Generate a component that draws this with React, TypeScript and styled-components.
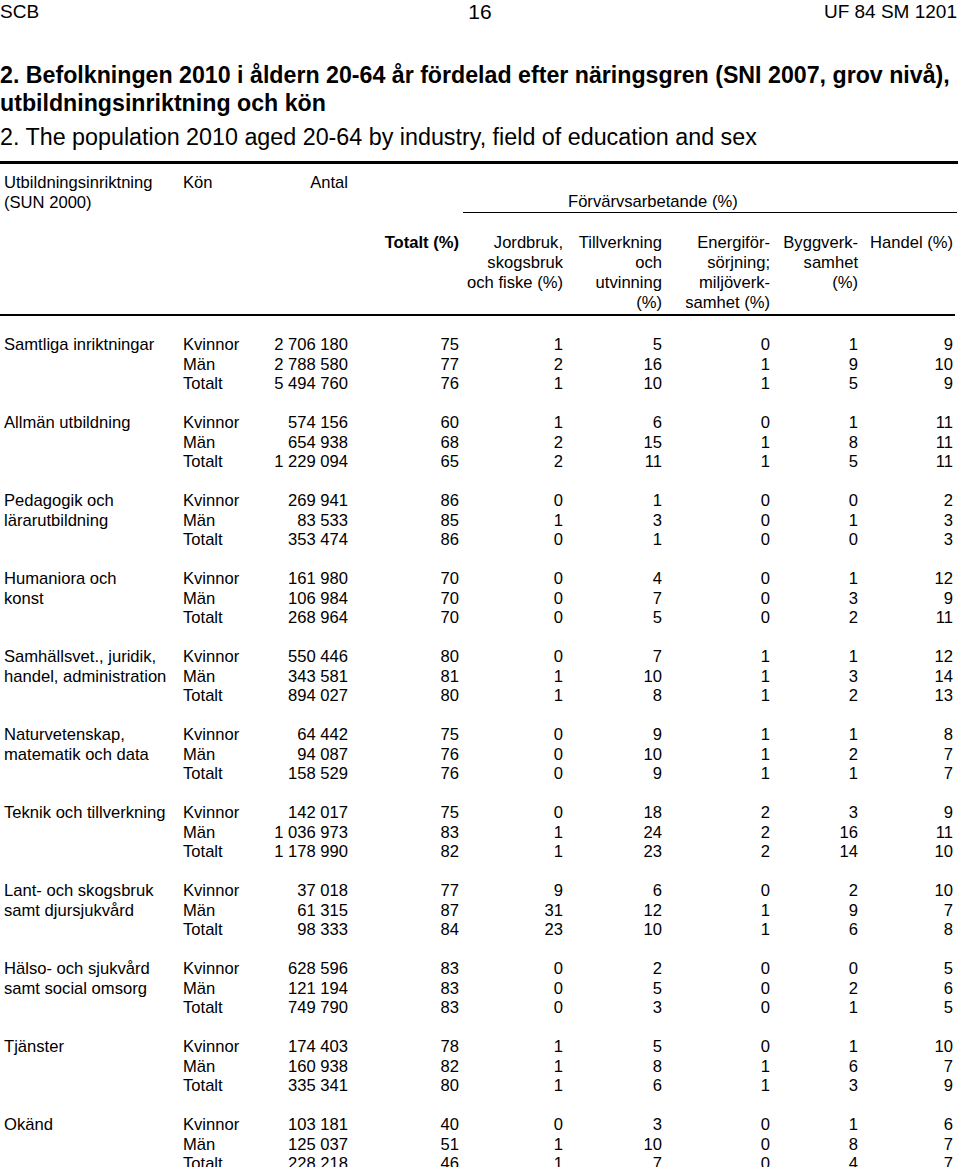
import React from "react";
import styled, { createGlobalStyle } from "styled-components";

const GlobalStyle = createGlobalStyle`
  html, body {
    margin: 0;
    padding: 0;
    background: #ffffff;
    overflow: hidden;
  }
  body {
    font-family: "Liberation Sans", Arial, Helvetica, sans-serif;
    color: #000;
  }
`;

const COLS = "183px 79px 86px 111px 104px 99px 108px 88px 95px";

const Page = styled.div`
  width: 958px;
  height: 1167px;
  overflow: hidden;
`;

const TopBar = styled.header`
  display: grid;
  grid-template-columns: 1fr auto 1fr;
  align-items: center;
  height: 24px;
  font-size: 19px;
  line-height: 24px;
`;

const TopLeft = styled.span`
  justify-self: start;
`;

const PageNo = styled.span`
  font-size: 21px;
  justify-self: center;
  margin-left: 2px;
`;

const TopRight = styled.span`
  justify-self: end;
  margin-right: 1px;
`;

const Title = styled.h1`
  margin: 37px 0 0 0;
  font-size: 23.2px;
  line-height: 28px;
  font-weight: bold;
  white-space: nowrap;
`;

const Subtitle = styled.h2`
  margin: 6px 0 0 0;
  font-size: 23.3px;
  line-height: 28px;
  font-weight: normal;
  white-space: nowrap;
`;

const ThickRule = styled.div`
  margin-top: 10px;
  height: 3px;
  background: #000;
  width: 958px;
`;

const HeadRowA = styled.div`
  display: grid;
  grid-template-columns: ${COLS};
  margin-top: 9px;
  font-size: 16.6px;
  line-height: 20px;
  height: 40px;
`;

const HeadRowB = styled.div`
  display: grid;
  grid-template-columns: ${COLS};
  margin-top: 20px;
  padding-bottom: 1px;
  font-size: 16.6px;
  line-height: 20px;
  border-bottom: 2px solid #000;
  width: 955px;
`;

const HeadCell = styled.div<{ $right?: boolean; $bold?: boolean; $pad?: number }>`
  text-align: ${(p) => (p.$right ? "right" : "left")};
  font-weight: ${(p) => (p.$bold ? "bold" : "normal")};
  padding-left: ${(p) => p.$pad ?? 0}px;
  white-space: nowrap;
`;

const SpanHead = styled.div`
  grid-column: 5 / 10;
  align-self: end;
  margin-left: 4px;
  margin-right: -4px;
  padding-left: 105px;
  border-bottom: 1px solid #000;
  white-space: nowrap;
`;

const Body = styled.div`
  padding-top: 19.25px;
`;

const Group = styled.div`
  display: grid;
  grid-template-columns: ${COLS};
  grid-auto-rows: 19.5px;
  margin-bottom: 19.5px;
  font-size: 16.6px;
  line-height: 19.5px;
`;

const Label = styled.div`
  grid-column: 1;
  grid-row: 1 / span 3;
  padding-left: 4px;
  white-space: nowrap;
`;

const Cell = styled.div<{ $right?: boolean }>`
  text-align: ${(p) => (p.$right ? "right" : "left")};
  white-space: nowrap;
`;

type Row = [string, string, ...number[]];
type GroupData = { label: string[]; rows: Row[] };

const data: GroupData[] = [
  {
    label: ["Samtliga inriktningar"],
    rows: [
      ["Kvinnor", "2 706 180", 75, 1, 5, 0, 1, 9],
      ["Män", "2 788 580", 77, 2, 16, 1, 9, 10],
      ["Totalt", "5 494 760", 76, 1, 10, 1, 5, 9],
    ],
  },
  {
    label: ["Allmän utbildning"],
    rows: [
      ["Kvinnor", "574 156", 60, 1, 6, 0, 1, 11],
      ["Män", "654 938", 68, 2, 15, 1, 8, 11],
      ["Totalt", "1 229 094", 65, 2, 11, 1, 5, 11],
    ],
  },
  {
    label: ["Pedagogik och", "lärarutbildning"],
    rows: [
      ["Kvinnor", "269 941", 86, 0, 1, 0, 0, 2],
      ["Män", "83 533", 85, 1, 3, 0, 1, 3],
      ["Totalt", "353 474", 86, 0, 1, 0, 0, 3],
    ],
  },
  {
    label: ["Humaniora och", "konst"],
    rows: [
      ["Kvinnor", "161 980", 70, 0, 4, 0, 1, 12],
      ["Män", "106 984", 70, 0, 7, 0, 3, 9],
      ["Totalt", "268 964", 70, 0, 5, 0, 2, 11],
    ],
  },
  {
    label: ["Samhällsvet., juridik,", "handel, administration"],
    rows: [
      ["Kvinnor", "550 446", 80, 0, 7, 1, 1, 12],
      ["Män", "343 581", 81, 1, 10, 1, 3, 14],
      ["Totalt", "894 027", 80, 1, 8, 1, 2, 13],
    ],
  },
  {
    label: ["Naturvetenskap,", "matematik och data"],
    rows: [
      ["Kvinnor", "64 442", 75, 0, 9, 1, 1, 8],
      ["Män", "94 087", 76, 0, 10, 1, 2, 7],
      ["Totalt", "158 529", 76, 0, 9, 1, 1, 7],
    ],
  },
  {
    label: ["Teknik och tillverkning"],
    rows: [
      ["Kvinnor", "142 017", 75, 0, 18, 2, 3, 9],
      ["Män", "1 036 973", 83, 1, 24, 2, 16, 11],
      ["Totalt", "1 178 990", 82, 1, 23, 2, 14, 10],
    ],
  },
  {
    label: ["Lant- och skogsbruk", "samt djursjukvård"],
    rows: [
      ["Kvinnor", "37 018", 77, 9, 6, 0, 2, 10],
      ["Män", "61 315", 87, 31, 12, 1, 9, 7],
      ["Totalt", "98 333", 84, 23, 10, 1, 6, 8],
    ],
  },
  {
    label: ["Hälso- och sjukvård", "samt social omsorg"],
    rows: [
      ["Kvinnor", "628 596", 83, 0, 2, 0, 0, 5],
      ["Män", "121 194", 83, 0, 5, 0, 2, 6],
      ["Totalt", "749 790", 83, 0, 3, 0, 1, 5],
    ],
  },
  {
    label: ["Tjänster"],
    rows: [
      ["Kvinnor", "174 403", 78, 1, 5, 0, 1, 10],
      ["Män", "160 938", 82, 1, 8, 1, 6, 7],
      ["Totalt", "335 341", 80, 1, 6, 1, 3, 9],
    ],
  },
  {
    label: ["Okänd"],
    rows: [
      ["Kvinnor", "103 181", 40, 0, 3, 0, 1, 6],
      ["Män", "125 037", 51, 1, 10, 0, 8, 7],
      ["Totalt", "228 218", 46, 1, 7, 0, 4, 7],
    ],
  },
];

const Lines: React.FC<{ lines: string[] }> = ({ lines }) => (
  <>
    {lines.map((l, i) => (
      <React.Fragment key={i}>
        {i > 0 && <br />}
        {l}
      </React.Fragment>
    ))}
  </>
);

export default function App() {
  return (
    <Page>
      <GlobalStyle />
      <TopBar>
        <TopLeft>SCB</TopLeft>
        <PageNo>16</PageNo>
        <TopRight>UF 84 SM 1201</TopRight>
      </TopBar>
      <Title>
        2. Befolkningen 2010 i åldern 20-64 år fördelad efter näringsgren (SNI 2007, grov nivå),
        <br />
        utbildningsinriktning och kön
      </Title>
      <Subtitle>2. The population 2010 aged 20-64 by industry, field of education and sex</Subtitle>
      <ThickRule />
      <HeadRowA>
        <HeadCell $pad={4}>
          <Lines lines={["Utbildningsinriktning", "(SUN 2000)"]} />
        </HeadCell>
        <HeadCell>Kön</HeadCell>
        <HeadCell $right>Antal</HeadCell>
        <SpanHead>Förvärvsarbetande (%)</SpanHead>
      </HeadRowA>
      <HeadRowB>
        <HeadCell />
        <HeadCell />
        <HeadCell />
        <HeadCell $right $bold>
          Totalt (%)
        </HeadCell>
        <HeadCell $right>
          <Lines lines={["Jordbruk,", "skogsbruk", "och fiske (%)"]} />
        </HeadCell>
        <HeadCell $right>
          <Lines lines={["Tillverkning", "och", "utvinning", "(%)"]} />
        </HeadCell>
        <HeadCell $right>
          <Lines lines={["Energiför-", "sörjning;", "miljöverk-", "samhet (%)"]} />
        </HeadCell>
        <HeadCell $right>
          <Lines lines={["Byggverk-", "samhet", "(%)"]} />
        </HeadCell>
        <HeadCell $right>Handel (%)</HeadCell>
      </HeadRowB>
      <Body>
        {data.map((g, gi) => (
          <Group key={gi}>
            <Label>
              <Lines lines={g.label} />
            </Label>
            {g.rows.map((r, ri) => (
              <React.Fragment key={ri}>
                <Cell style={{ gridRow: ri + 1, gridColumn: 2 }}>{r[0]}</Cell>
                {r.slice(1).map((v, ci) => (
                  <Cell key={ci} $right style={{ gridRow: ri + 1, gridColumn: ci + 3 }}>
                    {v}
                  </Cell>
                ))}
              </React.Fragment>
            ))}
          </Group>
        ))}
      </Body>
    </Page>
  );
}
